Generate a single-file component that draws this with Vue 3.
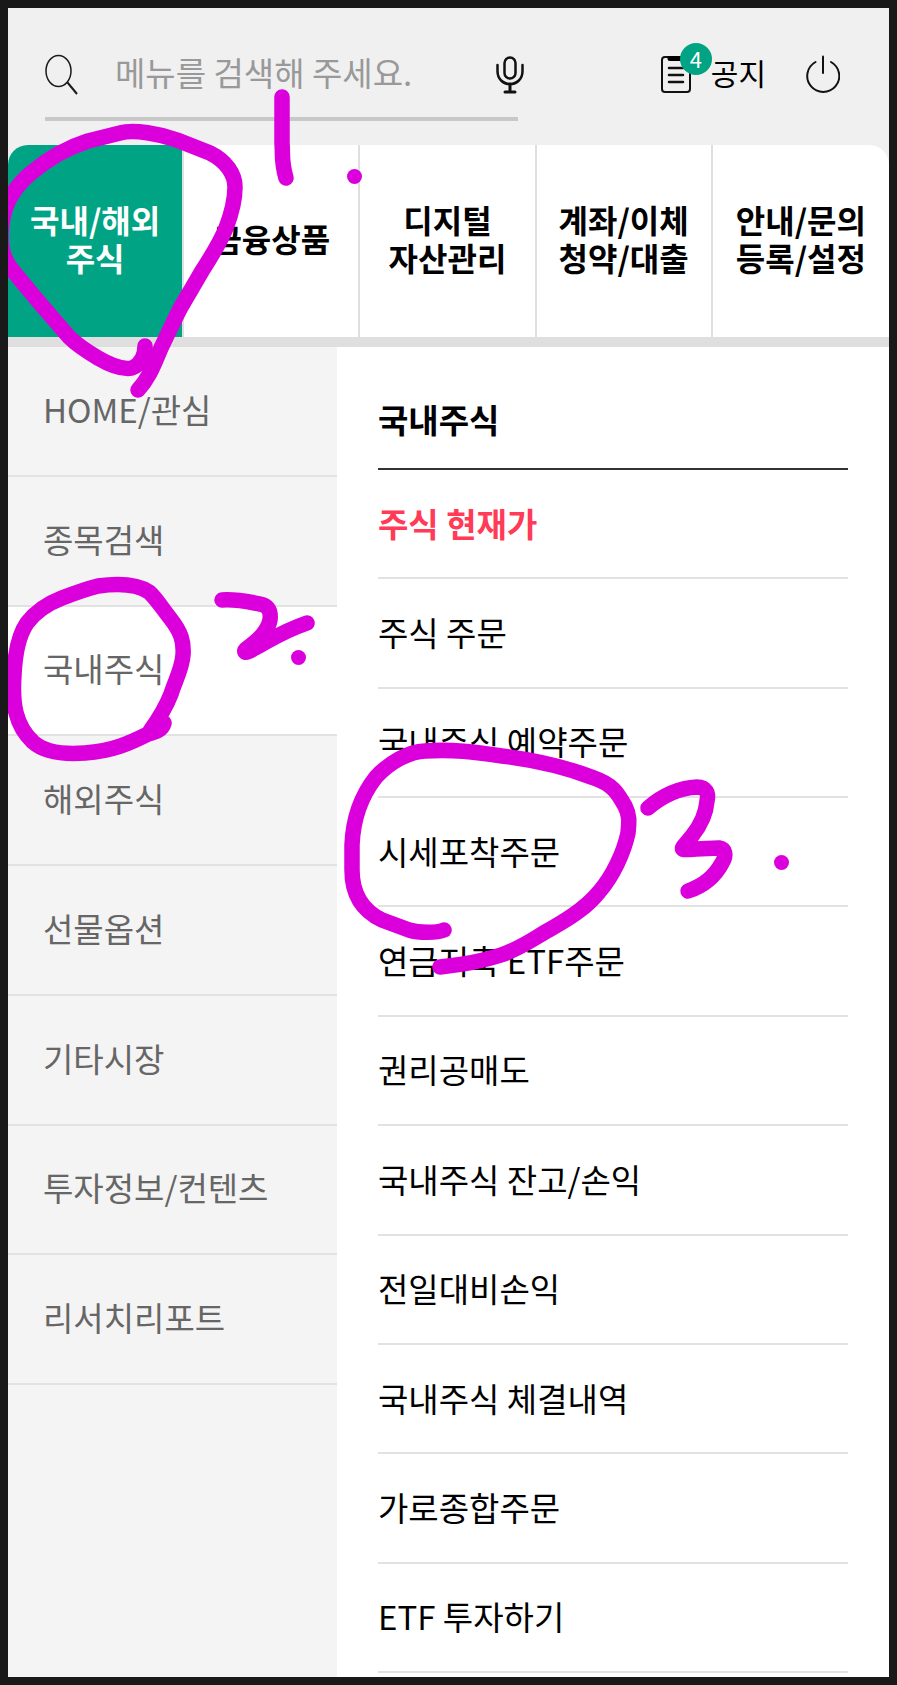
<script setup>
import { ref } from 'vue'

const keyword = ref('')
const activeTab = ref(0)
const activeCategory = ref(2)

const tabs = [
  '국내/해외\n주식',
  '금융상품',
  '디지털\n자산관리',
  '계좌/이체\n청약/대출',
  '안내/문의\n등록/설정'
]

const categories = [
  'HOME/관심',
  '종목검색',
  '국내주식',
  '해외주식',
  '선물옵션',
  '기타시장',
  '투자정보/컨텐츠',
  '리서치리포트'
]

const links = [
  { label: '주식 현재가', hot: true },
  { label: '주식 주문' },
  { label: '국내주식 예약주문' },
  { label: '시세포착주문' },
  { label: '연금저축 ETF주문' },
  { label: '권리공매도' },
  { label: '국내주식 잔고/손익' },
  { label: '전일대비손익' },
  { label: '국내주식 체결내역' },
  { label: '가로종합주문' },
  { label: 'ETF 투자하기' }
]
</script>

<template>
  <div class="page">
    <header class="header">
      <form class="search" @submit.prevent>
        <button type="submit" class="icon-btn" aria-label="검색">
          <svg width="34" height="42" viewBox="0 0 34 42" fill="none" stroke="#1a1a1a" stroke-width="1.5">
            <ellipse cx="13.5" cy="17" rx="12.5" ry="15.5" />
            <path d="M22.5 28.5L32 40" stroke-width="2" />
          </svg>
        </button>
        <input v-model="keyword" type="text" class="search__input" placeholder="메뉴를 검색해 주세요." aria-label="메뉴 검색" />
        <button type="button" class="icon-btn search__mic" aria-label="음성 검색">
          <svg width="28" height="38" viewBox="0 0 28 38" fill="none" stroke="#111" stroke-width="2.5" stroke-linecap="round">
            <rect x="8.5" y="1.5" width="11" height="21" rx="5.5" />
            <path d="M1.5 9V15C1.5 23 7 28 14 28S26.5 23 26.5 15V9" />
            <path d="M14 28V36M9 36H19" stroke-width="3" />
          </svg>
        </button>
      </form>

      <div class="actions">
        <button type="button" class="notice">
          <span class="notice__icon">
            <svg width="30" height="38" viewBox="0 0 30 38" fill="none" stroke="#111" stroke-width="2" stroke-linecap="round">
              <rect x="1" y="2" width="28" height="35" rx="3" />
              <path d="M9 3.5H22" stroke-width="5" stroke="#000" />
              <path d="M8 13H22M8 20H22M8 27H22" stroke-width="2.5" />
            </svg>
            <span class="notice__badge">4</span>
          </span>
          <span class="notice__label">공지</span>
        </button>
        <button type="button" class="icon-btn" aria-label="로그아웃">
          <svg width="34" height="38" viewBox="0 0 34 38" fill="none" stroke="#111" stroke-width="2" stroke-linecap="round">
            <path d="M9.5 7A16 16 0 1 0 25 7" />
            <path d="M17 1.5V18" />
          </svg>
        </button>
      </div>
    </header>

    <nav class="tabs">
      <button
        v-for="(label, i) in tabs"
        :key="label"
        type="button"
        class="tabs__item"
        :class="{ 'tabs__item--active': i === activeTab }"
        @click="activeTab = i"
      >{{ label }}</button>
    </nav>

    <div class="body">
      <nav class="sidebar">
        <ul class="sidebar__list">
          <li v-for="(name, i) in categories" :key="name">
            <button
              type="button"
              class="sidebar__item"
              :class="{ 'sidebar__item--active': i === activeCategory }"
              @click="activeCategory = i"
            >{{ name }}</button>
          </li>
        </ul>
      </nav>

      <main class="content">
        <h2 class="content__title">국내주식</h2>
        <ul class="content__list">
          <li v-for="link in links" :key="link.label">
            <a href="#" class="content__link" :class="{ 'content__link--hot': link.hot }">{{ link.label }}</a>
          </li>
        </ul>
      </main>
    </div>

    <!-- handwritten step marks -->
    <svg class="marks" viewBox="8 8 881 1669" preserveAspectRatio="xMinYMin meet" aria-hidden="true">
      <g fill="none" stroke="#db00db" stroke-width="15.5" stroke-linecap="round" stroke-linejoin="round">
        <path d="M145 346C145 359 139 365 132 368C122 370 110 365 98 358C88 352 76 344 69 337L38 301L13 271C5 262 1 250 1 237C1 208 12 189 31 173C49 158 69 147 88 141L120 133C134 129 160 134 177 140L210 153C226 161 235 174 235 187C235 202 231 215 226 228C220 243 211 257 202 271L181 307C174 320 168 334 161 348C153 367 149 378 138 390" />
        <path d="M282 97V143C283 154 281 161 286 178" />
        <path d="M164 723C162 730 156 732 148 734C130 743 113 751 85 753C59 755 42 750 33 742C15 725 12 703 14 675C15 653 18 636 27 623C36 611 49 603 62 598C75 593 86 589 98 586C120 583 137 584 149 592C156 598 162 608 170 618C181 632 184 641 183 655C182 669 175 681 171 694C166 707 160 717 150 731" />
        <path d="M222 600C237 599 249 602 260 604C269 606 271 611 270 620C268 631 259 640 246 649C243 652 245 655 255 648C269 641 281 632 307 623" />
        <path d="M444 930C437 933 419 933 409 930L382 920C361 910 352 893 352 870V845C353 820 361 796 376 777C390 762 408 752 425 751C452 749 475 752 502 756C535 760 568 768 594 778C614 785 618 794 625 806C630 816 629 822 628 833C624 852 613 876 599 892C586 908 570 918 554 927C534 938 522 948 501 955C480 962 460 965 440 967" />
        <path d="M648 808C663 795 680 788 697 787C706 787 709 793 707 801C706 814 700 826 692 836L683 847C681 850 684 850 696 849L719 848C725 849 727 855 722 863C714 878 703 886 688 891" />
      </g>
      <g fill="#db00db">
        <circle cx="354.5" cy="176.5" r="7.5" />
        <circle cx="298.5" cy="657.5" r="7.5" />
        <circle cx="781.5" cy="862.5" r="7.5" />
      </g>
    </svg>
  </div>
</template>

<style>
body { margin: 0; background: #191919; }
</style>

<style scoped>
.page {
  position: relative;
  display: flex;
  flex-direction: column;
  box-sizing: border-box;
  min-height: 100vh;
  border: 8px solid #191919;
  overflow: hidden;
  background: #f0f0f0;
  color: #000000;
  font-family: "Noto Sans CJK KR", sans-serif;
}
button {
  padding: 0;
  border: none;
  background: none;
  color: inherit;
  font: inherit;
  cursor: pointer;
}
ul { margin: 0; padding: 0; list-style: none; }
svg { display: block; }

.header {
  display: flex;
  justify-content: space-between;
  align-items: flex-start;
  height: 137px;
  box-sizing: border-box;
  padding: 24px 49px 0 37px;
}
.search {
  display: flex;
  align-items: center;
  width: 473px;
  height: 89px;
  box-sizing: border-box;
  border-bottom: 4px solid #c8c8c8;
}
.search__input {
  flex: 1;
  min-width: 0;
  padding: 0 0 6px 36px;
  border: none;
  outline: none;
  background: transparent;
  color: #000000;
  font-family: inherit;
  font-size: 33px;
}
.search__input::placeholder { color: #999999; opacity: 1; }
/* the mic hangs slightly past the underline */
.search__mic { margin-right: -6px; }

.actions { display: flex; align-items: center; gap: 40px; height: 84px; }
.notice { display: flex; align-items: center; gap: 20px; }
.notice__icon { position: relative; }
.notice__label { padding-bottom: 4px; font-size: 30px; line-height: 40px; }
.notice__badge {
  position: absolute;
  top: -12px;
  left: 19px;
  width: 32px;
  height: 32px;
  border-radius: 50%;
  background: #00a383;
  color: #ffffff;
  font-size: 22px;
  line-height: 30px;
  text-align: center;
}

.tabs {
  display: grid;
  grid-template-columns: repeat(5, 1fr);
  border-bottom: 10px solid #dfdfdf;
}
.tabs__item {
  height: 192px;
  padding-bottom: 6px;
  border-right: 2px solid #dfdfdf;
  background: #ffffff;
  font-size: 32px;
  font-weight: 700;
  line-height: 38px;
  white-space: pre;
}
.tabs__item:first-child { border-top-left-radius: 20px; }
.tabs__item:last-child { border-right: none; border-top-right-radius: 20px; }
.tabs__item--active { background: #00a383; color: #ffffff; }

.body { display: flex; flex: 1; }
.sidebar { flex: 0 0 329px; background: #f4f4f4; }
.sidebar__list { display: grid; grid-auto-rows: 1fr; height: 1038px; }
.sidebar__item {
  width: 100%;
  height: 100%;
  padding: 0 35px 4px;
  border-bottom: 2px solid #e2e2e2;
  color: #666666;
  font-size: 33px;
  text-align: left;
  white-space: nowrap;
}
.sidebar__item--active { background: #ffffff; }

.content { flex: 1; padding: 0 41px; background: #ffffff; }
.content__title {
  margin: 0;
  padding: 48px 0 25px;
  border-bottom: 2px solid #333333;
  font-size: 33px;
  font-weight: 700;
  line-height: 48px;
}
.content__list { display: grid; grid-auto-rows: 1fr; height: 1203px; }
.content__link {
  display: flex;
  align-items: center;
  height: 100%;
  box-sizing: border-box;
  padding-bottom: 2px;
  border-bottom: 2px solid #e2e2e2;
  color: #000000;
  font-size: 33px;
  text-decoration: none;
}
.content__link--hot { color: #ff3b57; font-weight: 700; }

.marks {
  position: absolute;
  top: 0;
  left: 0;
  width: 100%;
  pointer-events: none;
}
</style>
